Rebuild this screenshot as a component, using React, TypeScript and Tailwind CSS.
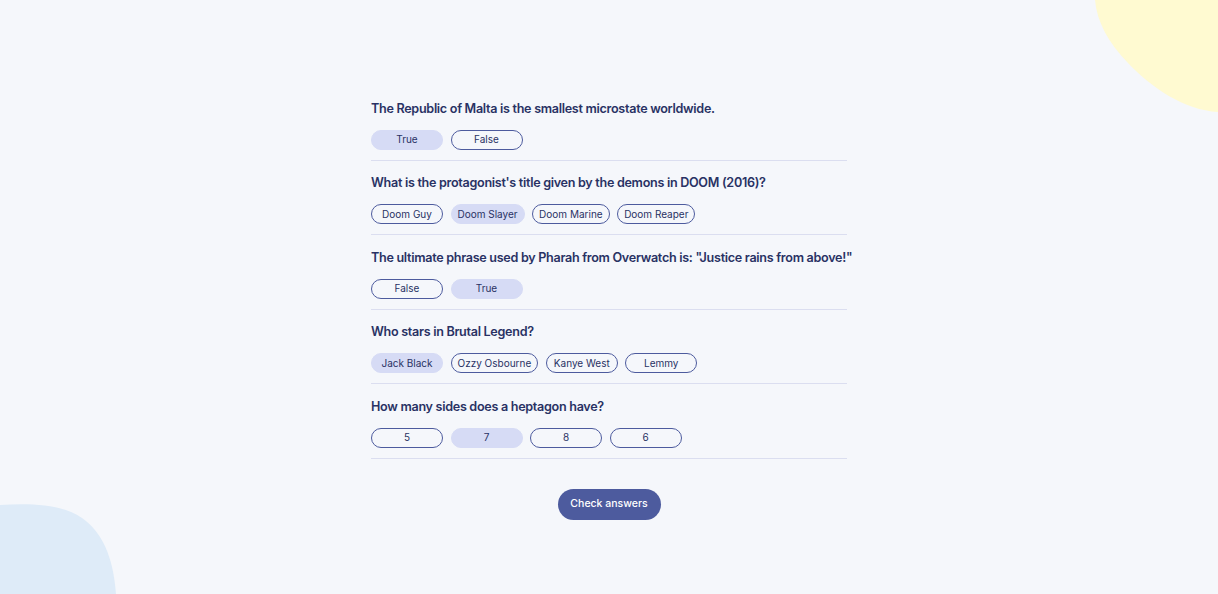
import { useState } from "react";

type Question = {
  question: string;
  answers: string[];
  picked: number;
};

const questions: Question[] = [
  {
    question: "The Republic of Malta is the smallest microstate worldwide.",
    answers: ["True", "False"],
    picked: 0,
  },
  {
    question: "What is the protagonist's title given by the demons in DOOM (2016)?",
    answers: ["Doom Guy", "Doom Slayer", "Doom Marine", "Doom Reaper"],
    picked: 1,
  },
  {
    question: 'The ultimate phrase used by Pharah from Overwatch is: "Justice rains from above!"',
    answers: ["False", "True"],
    picked: 1,
  },
  {
    question: "Who stars in Brutal Legend?",
    answers: ["Jack Black", "Ozzy Osbourne", "Kanye West", "Lemmy"],
    picked: 0,
  },
  {
    question: "How many sides does a heptagon have?",
    answers: ["5", "7", "8", "6"],
    picked: 1,
  },
];

const QuestionRow = ({ q }: { q: Question }) => {
  const [picked, setPicked] = useState(q.picked);

  return (
    <div className="flex flex-col gap-[13px] pt-[13.5px] pb-[10px] border-b border-[#DBDEF0]">
      <h2 className="whitespace-nowrap text-[12.6px] leading-[17px] font-semibold text-[#293264] tracking-[-0.3px]">
        {q.question}
      </h2>
      <div className="flex gap-[7.5px]">
        {q.answers.map((a, i) => (
          <button
            key={a}
            onClick={() => setPicked(i)}
            className={
              i === picked
                ? "h-[20px] min-w-[72px] px-[6px] rounded-[10px] border border-[#D6DBF5] bg-[#D6DBF5] text-[10px] text-[#293264]"
                : "h-[20px] min-w-[72px] px-[6px] rounded-[10px] border border-[#4D5B9E] text-[10px] text-[#293264]"
            }
          >
            {a}
          </button>
        ))}
      </div>
    </div>
  );
};

const App = () => {
  return (
    <div
      className="relative min-h-[594px] bg-[#F5F7FB] overflow-hidden"
      style={{ fontFamily: "Inter, 'Noto Sans', sans-serif" }}
    >
      {/* blobs */}
      <svg className="absolute top-0 right-0" width="124" height="114" viewBox="0 0 124 114">
        <path d="M1 0 C 3 22, 14 42, 34 63 C 58 88, 90 110, 124 112 L124 0 Z" fill="#FFFAD1" />
      </svg>
      <svg className="absolute bottom-0 left-0" width="118" height="90" viewBox="0 0 118 90">
        <path d="M0 1 C 30 -1, 62 0, 82 14 C 102 28, 113 52, 116 90 L0 90 Z" fill="#DEEBF8" />
      </svg>

      <div className="relative mx-auto w-[476px] pt-[86px] flex flex-col">
        {questions.map((q) => (
          <QuestionRow key={q.question} q={q} />
        ))}

        <div className="flex justify-center pt-[30px]">
          <button className="h-[31px] w-[103px] rounded-[16px] bg-[#4D5B9E] text-white text-[10.5px] font-medium">
            Check answers
          </button>
        </div>
      </div>
    </div>
  );
};

export default App;
